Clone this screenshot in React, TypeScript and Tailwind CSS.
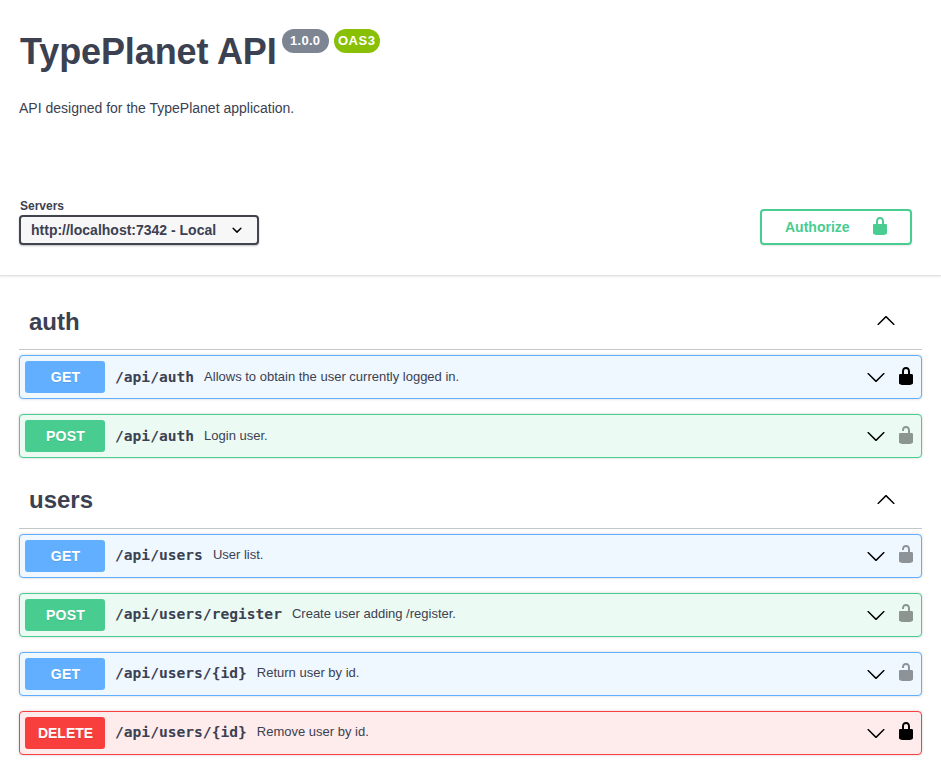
const LOCKED =
  'M15.8 8H14V5.6C14 2.703 12.665 1 10 1 7.334 1 6 2.703 6 5.6V8H4c-.553 0-1 .646-1 1.199V17c0 .549.428 1.139.951 1.307l1.197.387C5.672 18.861 6.55 19 7.1 19h5.8c.549 0 1.428-.139 1.951-.307l1.196-.387c.524-.167.953-.757.953-1.306V9.199C17 8.646 16.352 8 15.8 8zM12 8H8V5.199C8 3.754 8.797 3 10 3c1.203 0 2 .754 2 2.199V8z';
const UNLOCKED =
  'M15.8 8H14V5.6C14 2.703 12.665 1 10 1 7.334 1 6 2.703 6 5.6V6h2v-.801C8 3.754 8.797 3 10 3c1.203 0 2 .754 2 2.199V8H4c-.553 0-1 .646-1 1.199V17c0 .549.428 1.139.951 1.307l1.197.387C5.672 18.861 6.55 19 7.1 19h5.8c.549 0 1.428-.139 1.951-.307l1.196-.387c.524-.167.953-.757.953-1.306V9.199C17 8.646 16.352 8 15.8 8z';
const ARROW_DOWN =
  'M17.418 6.109c.272-.268.709-.268.979 0s.271.701 0 .969l-7.908 7.83c-.27.268-.707.268-.979 0l-7.908-7.83c-.27-.268-.27-.701 0-.969.271-.268.709-.268.979 0L10 13.25l7.418-7.141z';
const ARROW_UP =
  'M17.418 14.908c.272.268.709.268.979 0s.271-.701 0-.969l-7.908-7.83c-.27-.268-.707-.268-.979 0l-7.908 7.83c-.27.268-.27.701 0 .969.271.268.709.268.979 0L10 7.767l7.418 7.141z';
const SELECT_ARROW =
  'M13.418 7.859a.695.695 0 01.978 0 .68.68 0 010 .969l-3.908 3.83a.697.697 0 01-.979 0l-3.908-3.83a.68.68 0 010-.969.695.695 0 01.978 0L10 11l3.418-3.141z';

function Icon({ d, className = '' }: { d: string; className?: string }) {
  return (
    <svg viewBox="0 0 20 20" fill="currentColor" className={`size-5 shrink-0 ${className}`} aria-hidden="true">
      <path d={d} />
    </svg>
  );
}

type Method = 'GET' | 'POST' | 'DELETE';

interface Operation {
  method: Method;
  path: string;
  summary: string;
  locked: boolean;
}

interface Spacing {
  heading: string;
  arrow: string;
  path: string;
  summary: string;
  lock: string;
}

const rowStyles: Record<Method, string> = {
  GET: 'border-[#61affe] bg-[#eff7ff]',
  POST: 'border-[#49cc90] bg-[#ecfaf4]',
  DELETE: 'border-[#f93e3e] bg-[#feebeb]',
};

const badgeStyles: Record<Method, string> = {
  GET: 'bg-[#61affe] tracking-[0.2px]',
  POST: 'bg-[#49cc90] tracking-[0.2px]',
  DELETE: 'bg-[#f93e3e]',
};

const sections: { tag: string; spacing: Spacing; operations: Operation[] }[] = [
  {
    tag: 'auth',
    spacing: { heading: 'h-14', arrow: 'mb-1', path: '', summary: '', lock: 'mb-0.5' },
    operations: [
      { method: 'GET', path: '/api/auth', summary: 'Allows to obtain the user currently logged in.', locked: true },
      { method: 'POST', path: '/api/auth', summary: 'Login user.', locked: false },
    ],
  },
  {
    tag: 'users',
    spacing: { heading: 'h-[57px] pb-px', arrow: 'mb-0.5', path: 'pb-0.5', summary: 'pb-0.5', lock: 'mb-1' },
    operations: [
      { method: 'GET', path: '/api/users', summary: 'User list.', locked: false },
      { method: 'POST', path: '/api/users/register', summary: 'Create user adding /register.', locked: false },
      { method: 'GET', path: '/api/users/{id}', summary: 'Return user by id.', locked: false },
      { method: 'DELETE', path: '/api/users/{id}', summary: 'Remove user by id.', locked: true },
    ],
  },
];

function OperationRow({ operation, spacing }: { operation: Operation; spacing: Spacing }) {
  const { method, path, summary, locked } = operation;
  return (
    <div
      className={`flex h-11 items-center rounded border px-[5px] shadow-[0_0_3px_rgba(0,0,0,0.19)] ${rowStyles[method]}`}
    >
      <span
        className={`flex h-8 w-20 shrink-0 items-center justify-center rounded-[3px] pl-px text-sm font-bold text-white [text-shadow:0_1px_0_rgba(0,0,0,0.1)] ${badgeStyles[method]}`}
      >
        {method}
      </span>
      <span
        className={`pl-2.5 font-['DejaVu_Sans_Mono',monospace] text-[14.6px] leading-5 font-bold ${spacing.path}`}
      >
        {path}
      </span>
      <span className={`grow pl-2.5 text-[13px] leading-4 ${spacing.summary}`}>{summary}</span>
      <Icon d={ARROW_DOWN} className="text-black" />
      <Icon
        d={locked ? LOCKED : UNLOCKED}
        className={`ml-2.5 text-black ${spacing.lock} ${locked ? '' : 'opacity-40'}`}
      />
    </div>
  );
}

export default function App() {
  return (
    <div className="h-[773px] w-full overflow-hidden bg-white font-['Liberation_Sans',Arial,sans-serif] text-[#3b4151]">
      <header className="h-[276px] border-b border-[#e2e2e2] px-[19px] pt-7 shadow-[0_1px_2px_rgba(0,0,0,0.08)]">
        <div className="flex h-12 items-start">
          <h1 className="pt-0.5 pl-px text-[36px] leading-[44px] font-bold tracking-[-0.1px] whitespace-nowrap">
            TypePlanet API
          </h1>
          <span className="mt-px ml-[5px] flex h-6 w-[47px] items-center justify-center rounded-full bg-[#7d8492] text-[13px] font-bold tracking-[0.3px] text-white">
            1.0.0
          </span>
          <span className="mt-px ml-[5px] flex h-6 w-[46px] items-center justify-center rounded-full bg-[#89bf04] text-[13px] font-bold tracking-[0.5px] text-white">
            OAS3
          </span>
        </div>
        <p className="mt-6 text-sm leading-4">API designed for the TypePlanet application.</p>
        <div className="mt-[82px] flex items-start justify-between pr-[10px]">
          <div>
            <div className="pl-px text-xs leading-[17px] font-bold">Servers</div>
            <div className="flex h-[30px] w-60 items-center rounded border-2 border-[#41444e] bg-[#f7f7f7] pl-2.5 shadow-[0_1px_2px_rgba(0,0,0,0.25)]">
              <span className="grow text-sm leading-4 font-bold">http://localhost:7342 - Local</span>
              <Icon d={SELECT_ARROW} className="mr-[10px] text-black" />
            </div>
          </div>
          <button className="mt-[11px] flex h-9 w-[152px] items-center rounded border-2 border-[#49cc90] pl-[23px] text-sm font-bold text-[#49cc90] shadow-[0_1px_2px_rgba(0,0,0,0.1)]">
            <span className="grow text-left">Authorize</span>
            <Icon d={LOCKED} className="mr-5 mb-0.5" />
          </button>
        </div>
      </header>
      <main className="px-[19px] pt-[18px]">
        {sections.map(({ tag, spacing, operations }) => (
          <section key={tag} className="mb-[14px]">
            <h2
              className={`flex items-center justify-between border-b border-[#3b4151]/30 pr-[26px] pl-2.5 text-2xl font-bold ${spacing.heading}`}
            >
              {tag}
              <Icon d={ARROW_UP} className={`text-black ${spacing.arrow}`} />
            </h2>
            <div className="mt-[5px] flex flex-col gap-[15px]">
              {operations.map((op) => (
                <OperationRow key={op.method + op.path} operation={op} spacing={spacing} />
              ))}
            </div>
          </section>
        ))}
      </main>
    </div>
  );
}
